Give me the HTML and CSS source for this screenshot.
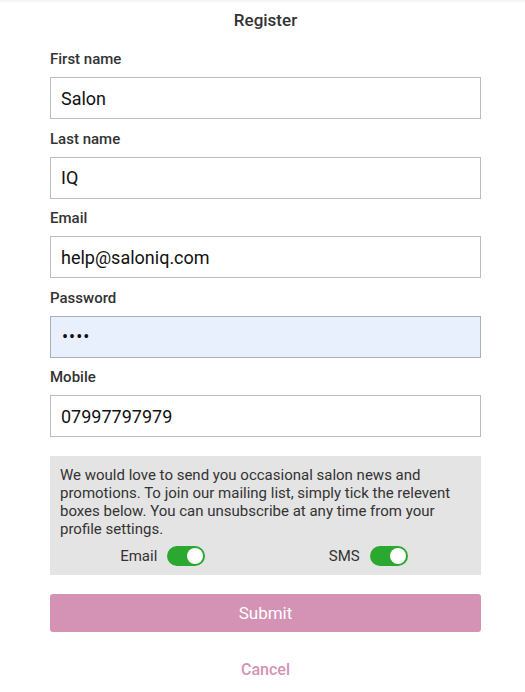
FILE: index.html
```html
<!DOCTYPE html>
<html lang="en">
<head>
    <meta charset="UTF-8">
    <meta name="viewport" content="width=device-width, initial-scale=1.0">
    <title>Register</title>
    <link rel="stylesheet" href="styles.css">
</head>
<body>
    <div class="topbar"></div>
    <div class="container">
        <h2 class="title">Register</h2>
        <form id="register-form">
            <label for="first-name">First name</label>
            <input type="text" id="first-name" value="Salon">
            <label for="last-name">Last name</label>
            <input type="text" id="last-name" value="IQ">
            <label for="email">Email</label>
            <input type="email" id="email" value="help@saloniq.com">
            <label for="password">Password</label>
            <input type="password" id="password" class="autofill" value="abcd">
            <label for="mobile">Mobile</label>
            <input type="text" id="mobile" value="07997797979">

            <div class="mailing">
                <p>We would love to send you occasional salon news and promotions. To join our mailing list, simply tick the relevent boxes below. You can unsubscribe at any time from your profile settings.</p>
                <div class="toggles">
                    <div class="toggle-item">
                        <span>Email</span>
                        <span class="switch on"><span class="knob"></span></span>
                    </div>
                    <div class="toggle-item">
                        <span>SMS</span>
                        <span class="switch on"><span class="knob"></span></span>
                    </div>
                </div>
            </div>

            <button type="submit">Submit</button>
        </form>
        <div class="cancel"><a href="#">Cancel</a></div>
    </div>
</body>
</html>
```

FILE: styles.css
```css
body {
    font-family: Roboto, "Liberation Sans", Arial, sans-serif;
    background-color: #fff;
    color: #333;
    margin: 0;
}
.topbar {
    height: 3px;
    background: linear-gradient(#f2f2f2, #fff);
}
.container {
    width: 431px;
    margin: 0 auto;
    position: relative;
    left: 3px;
}
.title {
    text-align: center;
    font-size: 17px;
    font-weight: 500;
    color: #333;
    margin: 6px 0 0;
    line-height: 22px;
}
form {
    display: flex;
    flex-direction: column;
    margin-top: 17px;
}
label {
    font-size: 15px;
    font-weight: 500;
    color: #333;
    line-height: 22px;
    margin-bottom: 7px;
}
input {
    box-sizing: border-box;
    height: 42px;
    margin: 0 0 8.5px;
    padding: 0 10px;
    font-family: Roboto, "Liberation Sans", Arial, sans-serif;
    font-size: 18px;
    color: #111;
    border: 1px solid #bdbdbd;
    border-radius: 0;
    background: #fff;
    outline: none;
}
input.autofill {
    background-color: #e8f0fe;
    border-color: #aab0bb;
    padding-left: 11px;
    letter-spacing: 1px;
}
.mailing {
    background: #e4e4e4;
    padding: 10px 10px 9px;
    margin-top: 10.5px;
}
.mailing p {
    margin: 0;
    font-size: 15px;
    line-height: 18px;
    color: #333;
}
.toggles {
    display: flex;
    margin-top: 8px;
}
.toggle-item {
    flex: 1;
    display: flex;
    justify-content: center;
    align-items: center;
    gap: 10px;
    font-size: 15px;
    color: #333;
}
.switch {
    position: relative;
    width: 38px;
    height: 20px;
    border-radius: 10px;
    background: #2aa82f;
    display: inline-block;
}
.switch .knob {
    position: absolute;
    top: 2px;
    right: 2px;
    width: 16px;
    height: 16px;
    border-radius: 50%;
    background: #fff;
}
button {
    margin-top: 19px;
    height: 38px;
    background-color: #d493b4;
    color: #fff;
    border: none;
    border-radius: 3px;
    font-family: Roboto, "Liberation Sans", Arial, sans-serif;
    font-size: 17px;
    cursor: pointer;
}
.cancel {
    text-align: center;
    margin-top: 28px;
}
.cancel a {
    color: #d493b4;
    font-size: 16px;
    font-weight: 500;
    text-decoration: none;
}
```
